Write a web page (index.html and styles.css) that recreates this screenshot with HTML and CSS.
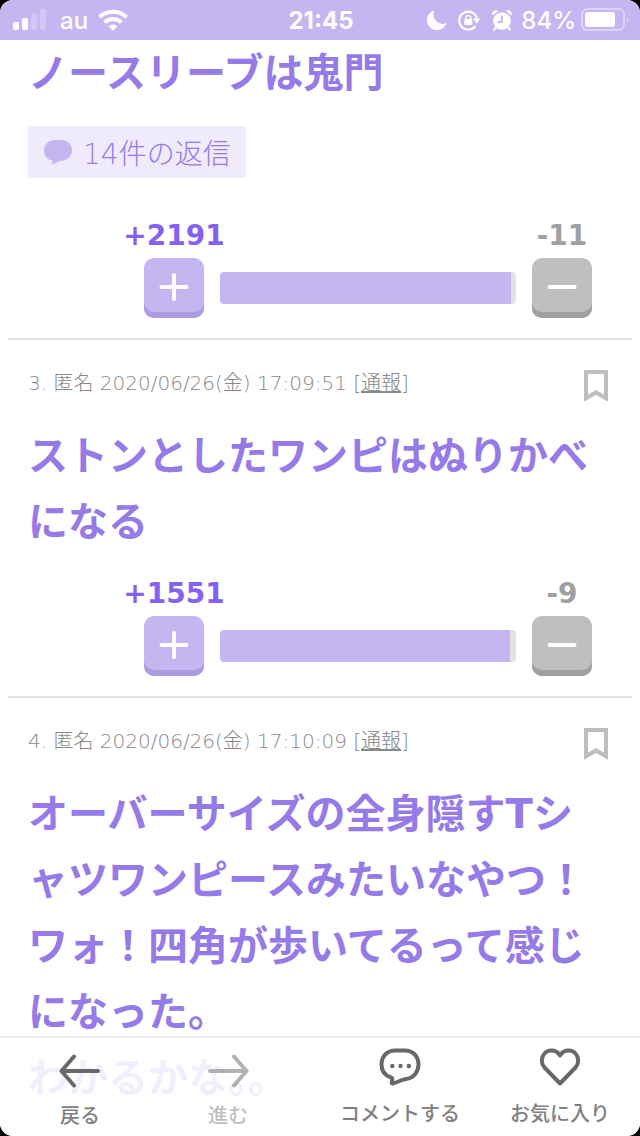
FILE: index.html
```html
<!DOCTYPE html>
<html lang="ja">
<head>
  <meta charset="UTF-8" />
  <meta name="viewport" content="width=device-width, initial-scale=1.0"/>
  <title>トピック</title>
  <link rel="stylesheet" href="styles.css">
</head>
<body>

<div class="screen">
  <header class="status-bar">
    <div class="status-left">
      <svg class="signal" width="34" height="22" viewBox="0 0 34 22" fill="#fff">
        <rect x="0" y="13" width="6" height="8" rx="1.5"/>
        <rect x="9" y="9" width="6" height="12" rx="1.5"/>
        <rect x="18" y="4" width="6" height="17" rx="1.5" opacity=".22"/>
        <rect x="27" y="0" width="6" height="21" rx="1.5" opacity=".22"/>
      </svg>
      <span class="carrier">au</span>
      <svg class="wifi" width="30" height="22" viewBox="0 0 30 22" fill="none" stroke="#fff" stroke-width="4">
        <path d="M1.5 8.2a19.5 19.5 0 0 1 27 0"/>
        <path d="M6.6 13.4a12 12 0 0 1 16.800 0"/>
        <path d="M15 21.800l-4.600-4.600q4.600-3.200 9.200 0z" fill="#fff" stroke="none"/>
      </svg>
    </div>
    <div class="clock">21:45</div>
    <div class="status-right">
      <svg width="20" height="20" viewBox="0 0 20 20" fill="#fff">
        <path d="M7.500.5a10 10 0 1 0 12 12.600A9.300 9.300 0 0 1 7.500.5z"/>
      </svg>
      <svg class="lock" width="23" height="21" viewBox="0 0 23 21" fill="none" stroke="#fff">
        <path d="M17.300 16.200a9 9 0 1 1 1.800-7.200" stroke-width="2.200"/>
        <path d="M15 8.500h7.500l-3.700 5z" fill="#fff" stroke="none"/>
        <rect x="6.300" y="9" width="8" height="6" rx=".8" fill="#fff" stroke="none"/>
        <path d="M7.900 9.500V8a2.400 2.400 0 0 1 4.800 0v1.500" stroke-width="1.400"/>
      </svg>
      <svg class="alarm" width="20" height="21" viewBox="0 0 20 21" fill="#fff">
        <circle cx="10" cy="11" r="8.800"/>
        <path d="M.8 5.500A3.500 3.500 0 0 1 6 1zM19.200 5.500A3.500 3.500 0 0 0 14 1z"/>
        <path d="M4 17.500L2 19.800M16 17.500l2 2.300" stroke="#fff" stroke-width="2" stroke-linecap="round"/>
        <path d="M10 5.500V12H5.500" fill="none" stroke="#c5b6f1" stroke-width="1.800"/>
      </svg>
      <span class="percent">84%</span>
      <svg class="battery" width="48" height="24" viewBox="0 0 48 24">
        <rect x="1" y="1" width="42" height="21" rx="5.500" fill="none" stroke="#fff" stroke-opacity=".4" stroke-width="2"/>
        <rect x="4" y="4" width="30" height="15" rx="3" fill="#fff"/>
        <path d="M46 8.500q3 3.300 0 6.500z" fill="#fff" opacity=".4"/>
      </svg>
    </div>
  </header>

  <main class="comments">
    <article class="comment">
      <p class="comment-body"><span class="line l1">ノースリーブは鬼門</span></p>
      <a class="replies">
        <svg width="28" height="25" viewBox="0 0 28 25" fill="#c5b6f1">
          <path d="M11 0h6c6.500 0 11 4.500 11 10.300 0 6-4.500 10.200-10.500 10.500-3 .2-5.500 2.500-9.300 4l.3-4.200C3.500 20 0 15.800 0 10.300 0 4.500 4.500 0 11 0z"/>
        </svg>
        <span>14件の返信</span>
      </a>
      <div class="vote first-vote">
        <div class="vote-box plus">
          <span class="count">+2191</span>
          <button class="vote-btn"><svg width="30" height="30" viewBox="0 0 30 30" stroke="#fff" stroke-width="4" stroke-linecap="round"><path d="M2.500 15h25M15 3v24"/></svg></button>
        </div>
        <div class="bar"><div class="bar-fill" style="width: 291px"></div></div>
        <div class="vote-box minus">
          <span class="count">-11</span>
          <button class="vote-btn"><svg width="30" height="30" viewBox="0 0 30 30" stroke="#fff" stroke-width="4" stroke-linecap="round"><path d="M2.500 15h25"/></svg></button>
        </div>
      </div>
    </article>

    <article class="comment">
      <div class="comment-head">
        <span class="meta">3. 匿名 2020/06/26(金) 17:09:51 [<u>通報</u>]</span>
        <svg width="24" height="32" viewBox="0 0 24 32" fill="none" stroke="#bebebe" stroke-width="4"><path d="M2 2h20v26.200l-10-5.800-10 5.800z"/></svg>
      </div>
      <p class="comment-body">
        <span class="line l2">ストンとしたワンピはぬりかべ</span>
        <span class="line l3">になる</span>
      </p>
      <div class="vote">
        <div class="vote-box plus">
          <span class="count">+1551</span>
          <button class="vote-btn"><svg width="30" height="30" viewBox="0 0 30 30" stroke="#fff" stroke-width="4" stroke-linecap="round"><path d="M2.500 15h25M15 3v24"/></svg></button>
        </div>
        <div class="bar"><div class="bar-fill" style="width: 290px"></div></div>
        <div class="vote-box minus">
          <span class="count">-9</span>
          <button class="vote-btn"><svg width="30" height="30" viewBox="0 0 30 30" stroke="#fff" stroke-width="4" stroke-linecap="round"><path d="M2.500 15h25"/></svg></button>
        </div>
      </div>
    </article>

    <article class="comment">
      <div class="comment-head">
        <span class="meta">4. 匿名 2020/06/26(金) 17:10:09 [<u>通報</u>]</span>
        <svg width="24" height="32" viewBox="0 0 24 32" fill="none" stroke="#bebebe" stroke-width="4"><path d="M2 2h20v26.200l-10-5.800-10 5.800z"/></svg>
      </div>
      <p class="comment-body">
        <span class="line l4">オーバーサイズの全身隠すTシ</span>
        <span class="line l5">ャツワンピースみたいなやつ！</span>
        <span class="line l6">ワォ！四角が歩いてるって感じ</span>
        <span class="line l7">になった。</span>
        <span class="line l8">わかるかな。。</span>
      </p>
    </article>
  </main>

  <nav class="toolbar">
    <a class="tool back">
      <svg width="42" height="34" viewBox="0 0 42 34" fill="none" stroke="#686868" stroke-width="4" stroke-linecap="round" stroke-linejoin="round"><path d="M39 17H2.500M15 2.500L2.500 17 15 31.500"/></svg>
      <span>戻る</span>
    </a>
    <a class="tool forward">
      <svg width="42" height="34" viewBox="0 0 42 34" fill="none" stroke="#686868" stroke-width="4" stroke-linecap="round" stroke-linejoin="round"><path d="M3 17h36.500M27 2.500L39.500 17 27 31.500"/></svg>
      <span>進む</span>
    </a>
    <a class="tool post">
      <svg width="42" height="38" viewBox="0 0 42 38" fill="none" stroke="#686868" stroke-width="4" stroke-linejoin="round">
        <path d="M16 2.500h10c8 0 13.500 6 13.500 14 0 7.500-5 13.500-12.500 14.500-5.500.8-8.500 3.500-13 4.500-1.500.3-1.500-1-1-2.500.5-1.800.5-3-1-3.500C6 27.500 2.500 22.500 2.500 16.500c0-8 5.500-14 13.500-14z"/>
        <g fill="#686868" stroke="none"><circle cx="13.300" cy="18" r="2.200"/><circle cx="21.500" cy="18" r="2.200"/><circle cx="29.800" cy="18" r="2.200"/></g>
      </svg>
      <span>コメントする</span>
    </a>
    <a class="tool favorite">
      <svg width="42" height="38" viewBox="0 0 42 38" fill="none" stroke="#686868" stroke-width="4" stroke-linejoin="round">
        <path d="M21 7.500C17.500 1.500 9.500 1 5.500 5.500 1.500 10 2.300 16 5.500 19.500L21 35.500l15.500-16c3.200-3.500 4-9.500 0-14C32.500 1 24.500 1.500 21 7.500z"/>
      </svg>
      <span>お気に入り</span>
    </a>
  </nav>
</div>

</body>
</html>
```
FILE: styles.css
```css
* {
  box-sizing: border-box;
}

body {
  margin: 0;
  background: #000;
  font-family: "DejaVu Sans", "Noto Sans CJK JP", sans-serif;
}

.screen {
  position: relative;
  display: flex;
  flex-direction: column;
  width: 640px;
  height: 1136px;
  background: #fff;
  border-radius: 13px;
  overflow: hidden;
}

.status-bar {
  display: grid;
  grid-template-columns: 1fr auto 1fr;
  align-items: center;
  flex: none;
  height: 40px;
  padding: 0 11px 0 13px;
  background: #c5b6f1;
  color: #fff;
  font-family: Inter, sans-serif;
  font-size: 24px;
  font-weight: 500;
}

.status-left,
.status-right {
  display: flex;
  align-items: center;
}

.status-right {
  justify-content: flex-end;
}

.carrier {
  margin-left: 13px;
}

.wifi {
  margin-left: 10px;
}

.clock {
  font-weight: 700;
}

.lock {
  margin-left: 11px;
}

.alarm {
  margin-left: 11px;
}

.percent {
  margin-left: 9px;
}

.battery {
  margin-left: 5px;
}

.comments {
  flex: 1;
  padding: 0 8px;
}

.comment {
  padding: 0 20px;
}

.comment:not(:last-child) {
  padding-bottom: 20px;
  border-bottom: 2px solid #e2e2e2;
}

.comment-head {
  display: flex;
  justify-content: space-between;
  padding: 30px 4px 21px 0;
}

.meta {
  color: #888;
  font-size: 20px;
  font-weight: 300;
  line-height: 26px;
  white-space: nowrap;
}

.comment-body {
  margin: 0;
  color: #957ae8;
  font-size: 40px;
  font-weight: bold;
  line-height: 66px;
}

.line {
  display: block;
  height: 66px;
  white-space: nowrap;
}

.replies {
  display: flex;
  align-items: center;
  width: 218px;
  height: 52px;
  margin-top: 20px;
  padding-left: 16px;
  gap: 11px;
  background: #efebfa;
  border-radius: 4px;
  color: #957ae8;
  font-size: 28px;
  font-weight: 300;
  white-space: nowrap;
}

.vote {
  display: flex;
  align-items: flex-end;
  justify-content: flex-end;
  gap: 16px;
  padding: 21px 20px 0 0;
}

.first-vote {
  padding-top: 40px;
}

.vote-box {
  display: flex;
  flex-direction: column;
  align-items: center;
  width: 60px;
}

.count {
  height: 40px;
  font-size: 28px;
  font-weight: bold;
  line-height: 36px;
}

.plus .count {
  color: #8561f0;
}

.minus .count {
  color: #a0a0a0;
}

.vote-btn {
  display: flex;
  align-items: center;
  justify-content: center;
  width: 60px;
  height: 60px;
  padding: 0 0 2px;
  border: none;
  border-radius: 10px;
  background: #c5b6f1;
  box-shadow: inset 0 -6px #ad9bdf;
}

.minus .vote-btn {
  background: #bfbfbf;
  box-shadow: inset 0 -6px #a0a0a0;
}

.bar {
  width: 296px;
  height: 32px;
  margin-bottom: 14px;
  background: #e2e2e2;
  border-radius: 4px;
  overflow: hidden;
}

.bar-fill {
  height: 100%;
  background: #c5b6f1;
}

/* translucent bar over the scrolling comments */
.toolbar {
  position: absolute;
  left: 0;
  bottom: 0;
  display: grid;
  grid-template-columns: 160px 136px 208px 112px;
  width: 640px;
  height: 100px;
  border-top: 2px solid #ebebeb;
  background: rgba(255, 255, 255, 0.88);
}

.tool {
  display: flex;
  flex-direction: column;
  align-items: center;
  padding-top: 10px;
  color: #808080;
  font-size: 20px;
  font-weight: 500;
  line-height: 30px;
  white-space: nowrap;
}

.tool span {
  margin-top: 13px;
}

.back,
.forward {
  padding-top: 16px;
}

.forward {
  opacity: 0.5;
}
```
